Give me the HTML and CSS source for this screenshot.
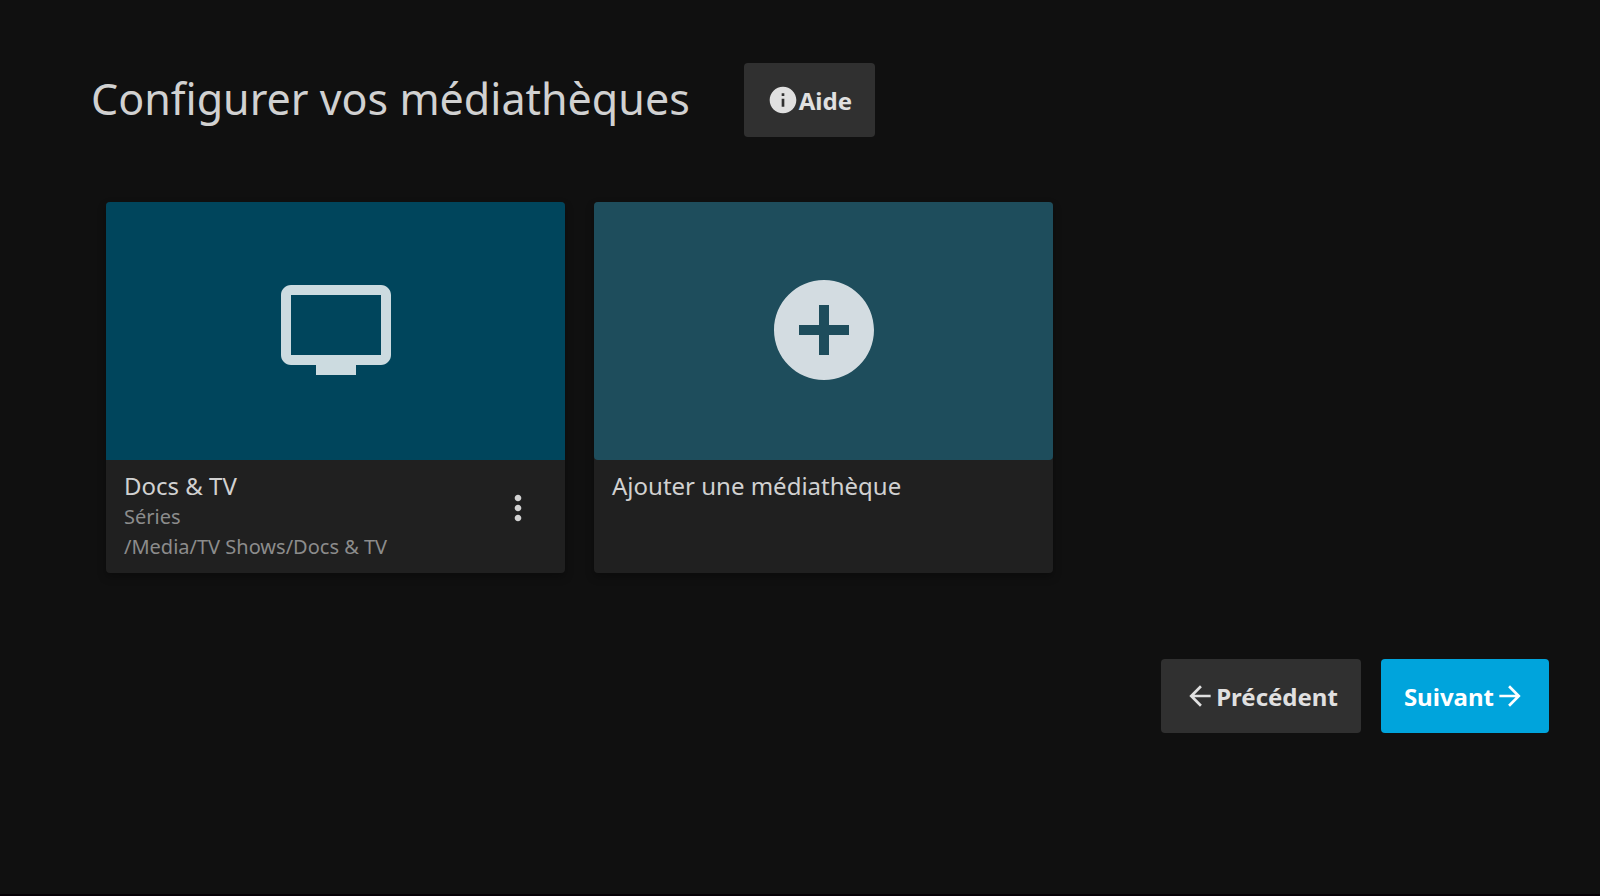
FILE: index.html
```
<!DOCTYPE html>
<html lang="fr">
<head>
    <meta charset="UTF-8">
    <meta name="viewport" content="width=device-width, initial-scale=1.0">
    <title>Configurer vos médiathèques</title>
    <link rel="stylesheet" href="styles.css">
</head>
<body>
    <main class="wizard">
        <header class="wizard-header">
            <h1>Configurer vos médiathèques</h1>
            <button type="button" class="button">
                <svg class="icon" viewBox="0 0 24 24" aria-hidden="true"><path d="M12 2C6.48 2 2 6.48 2 12s4.48 10 10 10 10-4.48 10-10S17.52 2 12 2zm1 15h-2v-6h2v6zm0-8h-2V7h2v2z"/></svg>
                <span>Aide</span>
            </button>
        </header>

        <!-- Liste des médiathèques -->
        <section class="libraries">
            <article class="card">
                <div class="card-image">
                    <svg class="card-icon" viewBox="0 0 24 24" aria-hidden="true"><path d="M21 3H3c-1.11 0-2 .89-2 2v12c0 1.1.89 2 2 2h5v2h8v-2h5c1.1 0 2-.9 2-2V5c0-1.11-.9-2-2-2zm0 14H3V5h18v12z"/></svg>
                </div>
                <div class="card-footer">
                    <div class="card-text">
                        <h2>Docs &amp; TV</h2>
                        <p>Séries</p>
                        <p>/Media/TV Shows/Docs &amp; TV</p>
                    </div>
                    <button type="button" class="menu-button" aria-label="Menu">
                        <svg class="menu-icon" viewBox="0 0 24 24" aria-hidden="true"><path d="M12 8c1.1 0 2-.9 2-2s-.9-2-2-2-2 .9-2 2 .9 2 2 2zm0 2c-1.1 0-2 .9-2 2s.9 2 2 2 2-.9 2-2-.9-2-2-2zm0 6c-1.1 0-2 .9-2 2s.9 2 2 2 2-.9 2-2-.9-2-2-2z"/></svg>
                    </button>
                </div>
            </article>

            <article class="card">
                <button type="button" class="card-image card-image-add" aria-label="Ajouter une médiathèque">
                    <svg class="card-icon" viewBox="0 0 24 24" aria-hidden="true"><path d="M12 2C6.48 2 2 6.48 2 12s4.48 10 10 10 10-4.48 10-10S17.52 2 12 2zm5 11h-4v4h-2v-4H7v-2h4V7h2v4h4v2z"/></svg>
                </button>
                <div class="card-footer">
                    <div class="card-text">
                        <h2>Ajouter une médiathèque</h2>
                    </div>
                </div>
            </article>
        </section>

        <!-- Navigation -->
        <nav class="wizard-nav">
            <button type="button" class="button">
                <svg class="icon" viewBox="0 0 24 24" aria-hidden="true"><path d="M20 11H7.83l5.59-5.59L12 4l-8 8 8 8 1.41-1.41L7.83 13H20v-2z"/></svg>
                <span>Précédent</span>
            </button>
            <button type="button" class="button button-submit">
                <span>Suivant</span>
                <svg class="icon" viewBox="0 0 24 24" aria-hidden="true"><path d="M12 4l-1.41 1.41L16.17 11H4v2h12.17l-5.58 5.59L12 20l8-8z"/></svg>
            </button>
        </nav>
    </main>
</body>
</html>
```
FILE: styles.css
```
* {
    box-sizing: border-box;
}
body {
    margin: 0;
    min-height: 100vh;
    border-bottom: 2px solid #050005;
    background-color: #101010;
    color: #d1d1d1;
    font-family: "Noto Sans", sans-serif;
    font-size: 24px;
}
.wizard {
    padding: 63px 51px 40px;
}
.wizard-header {
    display: flex;
    align-items: center;
    gap: 54px;
    padding-left: 40px;
}
h1, h2, p {
    margin: 0;
    font-weight: 400;
}
h1 {
    padding-bottom: 2px;
    font-size: 43px;
    line-height: 60px;
}
.button {
    display: flex;
    align-items: center;
    height: 74px;
    padding: 0 23px;
    border: 0;
    border-radius: 4px;
    background-color: #303030;
    color: #e0e0e0;
    font-family: inherit;
    font-size: 24px;
    font-weight: 700;
    cursor: pointer;
}
.button-submit {
    background-color: #00a4dc;
    color: #fff;
}
.icon {
    width: 32px;
    height: 32px;
    fill: currentColor;
}
/* Cartes des médiathèques */
.libraries {
    display: grid;
    grid-template-columns: repeat(3, 1fr);
    gap: 29px;
    padding: 0 8px 0 55px;
    margin-top: 65px;
}
.card {
    display: flex;
    flex-direction: column;
    border-radius: 4px;
    background-color: #202020;
    box-shadow: 0 4px 8px rgba(0, 0, 0, 0.3);
}
.card-image {
    display: flex;
    align-items: center;
    justify-content: center;
    width: 100%;
    aspect-ratio: 16 / 9;
    padding: 0 0 2px;
    border: 0;
    border-radius: 4px 4px 0 0;
    background-color: #00455c;
    color: #ccdbe0;
}
.card-image-add {
    border-radius: 4px;
    background-color: #1e4d5c;
    color: #d3dce1;
    cursor: pointer;
}
.card-icon {
    width: 120px;
    height: 120px;
    fill: currentColor;
}
.card-footer {
    display: flex;
    align-items: flex-start;
    justify-content: space-between;
    flex: 1;
    padding: 10px 27px 11px 18px;
}
h2 {
    font-size: 24px;
    line-height: 32px;
}
p {
    color: #8c8c8c;
    font-size: 20px;
    line-height: 30px;
}
.menu-button {
    display: flex;
    padding: 18px 0;
    border: 0;
    background: none;
    color: #d1d1d1;
    cursor: pointer;
}
.menu-icon {
    width: 40px;
    height: 40px;
    fill: currentColor;
}
.wizard-nav {
    display: flex;
    justify-content: flex-end;
    gap: 20px;
    margin-top: 86px;
}
```
